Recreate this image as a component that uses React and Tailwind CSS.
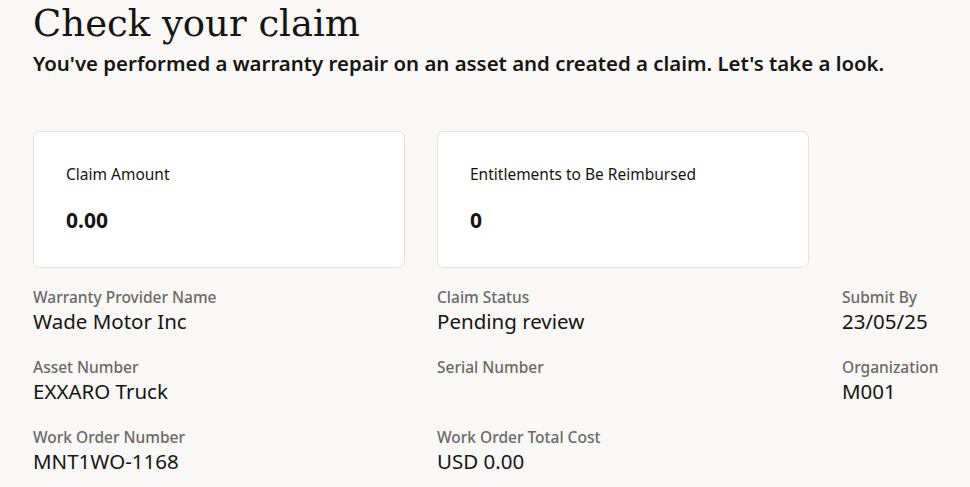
import React from 'react';

const cards = [
  { label: 'Claim Amount', value: '0.00' },
  { label: 'Entitlements to Be Reimbursed', value: '0' },
];

const fields = [
  { label: 'Warranty Provider Name', value: 'Wade Motor Inc' },
  { label: 'Claim Status', value: 'Pending review' },
  { label: 'Submit By', value: '23/05/25' },
  { label: 'Asset Number', value: 'EXXARO Truck' },
  { label: 'Serial Number', value: '' },
  { label: 'Organization', value: 'M001' },
  { label: 'Work Order Number', value: 'MNT1WO-1168' },
  { label: 'Work Order Total Cost', value: 'USD 0.00' },
  { label: '', value: '' },
];

const SummaryCard = ({ label, value }) => (
  <div className="h-[137px] rounded-[7px] border border-[#e4e2df] bg-white px-[32px] pt-[32px]">
    <p className="text-[15.5px] leading-5 text-[#161513]">{label}</p>
    <p className="mt-[24px] text-[21px] font-bold leading-6 text-[#161513]">{value}</p>
  </div>
);

const Field = ({ label, value }) => (
  <div className="h-[70px]">
    {label && <p className="text-[15.5px] font-medium leading-[22px] text-[#6b6967]">{label}</p>}
    {value && <p className="text-[20.5px] leading-[26px] text-[#161513]">{value}</p>}
  </div>
);

export default function App() {
  return (
    <div
      className="min-h-[487px] w-full overflow-hidden bg-[#f9f8f6] px-[33px] text-[#161513]"
      style={{ fontFamily: '"Noto Sans", sans-serif' }}
    >
      <h1
        className="pt-[2px] text-[37px] leading-[44px] text-[#161513]"
        style={{ fontFamily: '"DejaVu Serif", serif' }}
      >
        Check your claim
      </h1>
      <p className="mt-[3px] text-[20.4px] font-semibold leading-7 text-[#161513]">
        You've performed a warranty repair on an asset and created a claim. Let's take a look.
      </p>

      <div className="mt-[54px] grid w-[776px] grid-cols-2 gap-[32px]">
        {cards.map((c) => (
          <SummaryCard key={c.label} {...c} />
        ))}
      </div>

      <div className="mt-[18px] grid grid-cols-[404px_405px_1fr]">
        {fields.map((f, i) => (
          <Field key={i} {...f} />
        ))}
      </div>
    </div>
  );
}
